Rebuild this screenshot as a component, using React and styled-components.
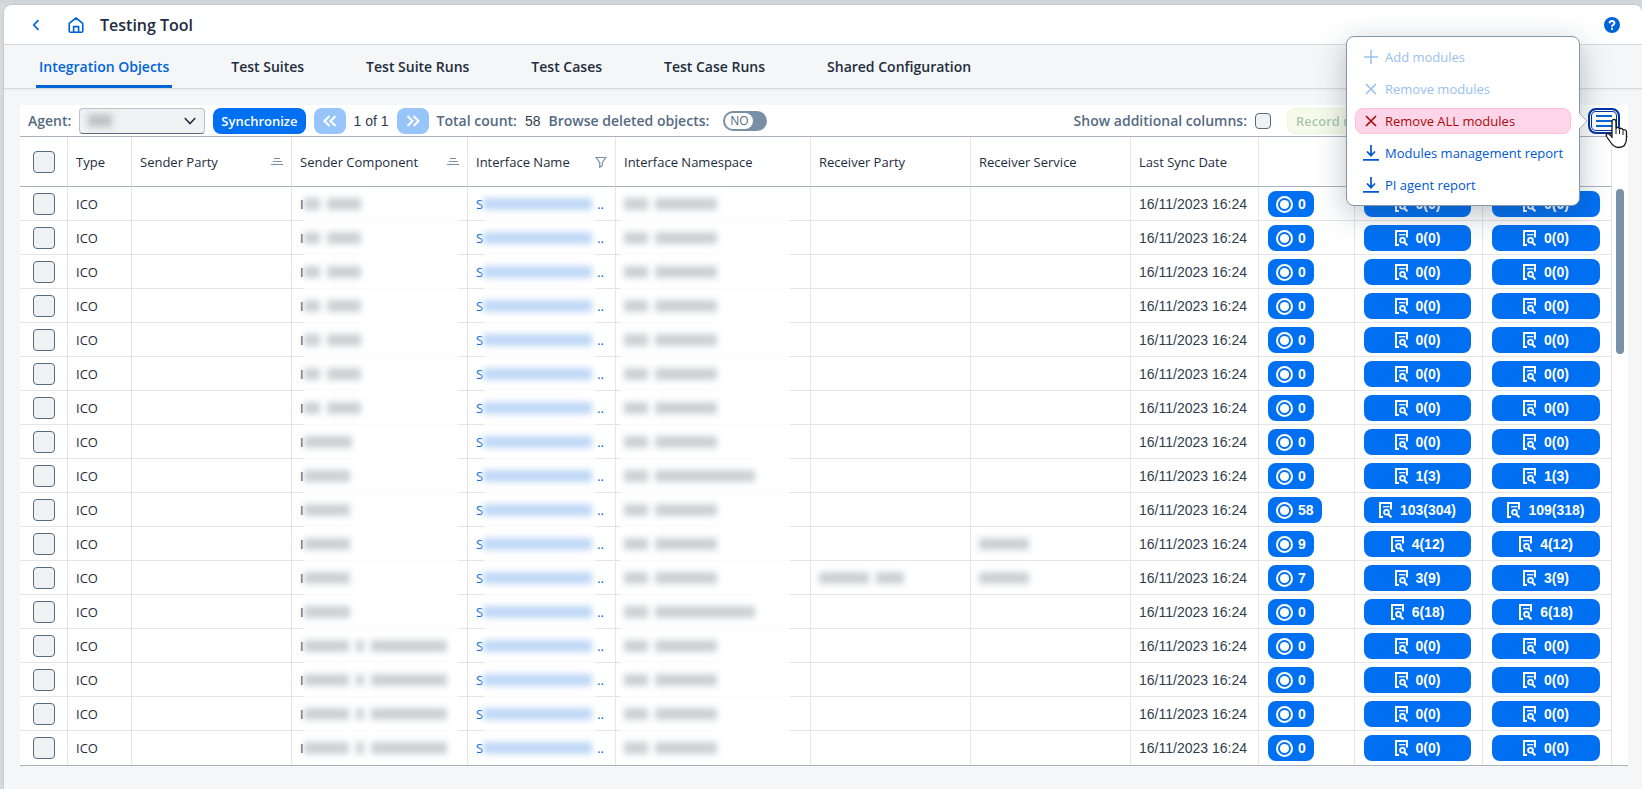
import styled, { createGlobalStyle, css } from "styled-components";
import { useState } from "react";

const GlobalStyle = createGlobalStyle`
  * {
    box-sizing: border-box;
  }

  body {
    margin: 0;
    background: #d5dadd;
    color: #1d2d3e;
    font-family: "Open Sans", "Noto Sans", sans-serif;
    font-size: 13px;
  }

  button, input, select {
    margin: 0;
    font-family: inherit;
    font-size: inherit;
  }
`;

const Page = styled.div`
  min-height: 100vh;
  padding: 5px 0 0 4px;
  background: linear-gradient(#cfd4d8, #d5dadd 6px);
  display: flex;
`;

const AppWindow = styled.div`
  flex: 1;
  min-width: 0;
  border-radius: 8px 8px 0 0;
  background: #f5f6f7;
  box-shadow: 0 0 2px rgba(85, 107, 130, 0.4);
`;

const ShellBar = styled.header`
  display: flex;
  align-items: center;
  height: 40px;
  padding: 0 22px 0 24px;
  border-radius: 8px 8px 0 0;
  border-bottom: 1px solid #d9d9d9;
  background: #fff;
`;

const IconButton = styled.button`
  display: flex;
  align-items: center;
  justify-content: center;
  width: 16px;
  height: 16px;
  padding: 0;
  border: none;
  background: none;
  color: #0064d9;
  cursor: pointer;
  margin-right: ${(props) => props.$gap || "0"};
`;

const Title = styled.h1`
  flex: 1;
  margin: 0;
  font-size: 16px;
  line-height: 20px;
  font-weight: 600;
`;

const Tabs = styled.nav`
  display: flex;
  gap: 56px;
  height: 44px;
  padding: 0 32px;
  border-bottom: 1px solid #d9d9d9;
  box-shadow: 0 1px 2px rgba(85, 107, 130, 0.08);
`;

const Tab = styled.a`
  padding: 0 3px;
  line-height: 44px;
  font-size: 14px;
  font-weight: 600;
  color: #1d2d3e;
  text-decoration: none;
  white-space: nowrap;

  ${(props) =>
    props.$active &&
    css`
      color: #0064d9;
      box-shadow: inset 0 -3px 0 #0064d9;
    `}
`;

const Panel = styled.main`
  margin: 16px 14px 23px 16px;
  background: #fff;
  border-bottom: 1px solid #a8b2bd;
`;

const Toolbar = styled.div`
  display: flex;
  align-items: center;
  justify-content: space-between;
  height: 32px;
  padding: 0 8px;
  border-bottom: 1px solid #a8b2bd;
`;

const ToolbarGroup = styled.div`
  display: flex;
  align-items: center;
  gap: 8px;
`;

const Label = styled.label`
  font-size: 14px;
  font-weight: 600;
  color: #556b82;
  white-space: nowrap;
`;

const Value = styled.span`
  font-family: "Liberation Sans", Arial, sans-serif;
  font-size: 14px;
  color: #2f3e4e;
  white-space: nowrap;
`;

const SelectBox = styled.div`
  position: relative;
  width: 126px;
  height: 26px;

  svg {
    position: absolute;
    right: 9px;
    top: 7px;
    pointer-events: none;
  }
`;

const Select = styled.select`
  appearance: none;
  width: 100%;
  height: 100%;
  border: 1px solid #bcc3ca;
  border-bottom-color: #556b82;
  border-radius: 4px;
  background: #eff1f2;
`;

const SelectValue = styled.span`
  position: absolute;
  left: 9px;
  top: 6px;
  width: 24px;
  height: 13px;
  background: #c0c3c6;
  filter: blur(3px);
  pointer-events: none;
`;

const Button = styled.button`
  display: flex;
  align-items: center;
  justify-content: center;
  height: 26px;
  padding: 0 8px;
  border: none;
  border-radius: 8px;
  background: #0070f2;
  color: #fff;
  font-weight: 600;
  white-space: nowrap;
  cursor: pointer;

  &:disabled {
    opacity: 0.4;
    cursor: default;
  }
`;

const PageButton = styled(Button)`
  width: 32px;
  padding: 0;
`;

const RecordButton = styled(Button)`
  justify-content: flex-start;
  width: 160px;
  margin: 0 133px 0 8px;
  border: 1px solid #d5e8a0;
  background: #ebf5cb;
  color: #256f3a;
`;

const Switch = styled.label`
  display: flex;
  align-items: center;
  width: 44px;
  height: 20px;
  margin-left: 6px;
  border: 2px solid #788fa6;
  border-radius: 10px;
  background: #788fa6;
  cursor: pointer;

  input {
    position: absolute;
    opacity: 0;
  }
`;

const SwitchHandle = styled.span`
  width: 28px;
  height: 16px;
  margin-left: ${(props) => (props.$on ? "12px" : "0")};
  border-radius: 8px;
  background: #fff;
  color: #556b82;
  font-size: 12px;
  line-height: 16px;
  text-align: center;
`;

const Checkbox = styled.input.attrs({ type: "checkbox" })`
  appearance: none;
  display: block;
  width: ${(props) => props.$size || "22px"};
  height: ${(props) => props.$size || "22px"};
  border: 1px solid #556b82;
  border-radius: 4px;
  background: #eff1f2;

  &:checked {
    background: #0064d9;
  }
`;

const MenuAnchor = styled.div`
  position: relative;
`;

const MenuButton = styled.button`
  display: flex;
  align-items: center;
  justify-content: center;
  width: 32px;
  height: 26px;
  padding: 0;
  border: 2px solid #0032a5;
  border-radius: 8px;
  background: #fff;
  box-shadow: inset 0 0 0 1px #fff, inset 0 0 0 2px #0032a5;
  color: #0064d9;
`;

const Popover = styled.div`
  position: absolute;
  z-index: 2;
  right: 40px;
  top: -72px;
  width: 234px;
  padding: 7px 8px;
  display: flex;
  flex-direction: column;
  gap: 6px;
  border: 1px solid #8696a9;
  border-radius: 8px;
  background: #fff;
  box-shadow: 0 8px 30px rgba(34, 53, 72, 0.3);
`;

const PopoverArrow = styled.svg`
  position: absolute;
  left: 100%;
  top: 76px;
`;

const MenuItem = styled.button`
  display: flex;
  align-items: center;
  gap: 6px;
  height: 26px;
  padding: 0 0 0 7px;
  border: 1px solid transparent;
  border-radius: 8px;
  background: none;
  color: #0057d2;
  font-weight: 500;
  white-space: nowrap;

  svg {
    flex-shrink: 0;
  }

  &:disabled {
    color: #99c1ee;
  }

  ${(props) =>
    props.$danger &&
    css`
      border-color: #ffc0dc;
      background: #ffd6e9;
      color: #aa0808;
    `}
`;

const Cursor = styled.svg`
  position: absolute;
  z-index: 3;
  left: 17px;
  top: 0;
  pointer-events: none;
`;

const TableArea = styled.div`
  display: flex;
`;

const Table = styled.table`
  flex: 1;
  min-width: 0;
  table-layout: fixed;
  border-spacing: 0;
`;

const HeaderCell = styled.th`
  width: ${(props) => props.$width};
  height: 50px;
  padding: 0 8px;
  border-right: 1px solid #e5e5e5;
  border-bottom: 1px solid #a8b2bd;
  font-weight: 400;
  text-align: left;
  white-space: nowrap;

  &:first-child {
    padding-left: 13px;
  }
`;

const HeaderContent = styled.div`
  display: flex;
  align-items: center;
  justify-content: space-between;
`;

const Cell = styled.td`
  height: 34px;
  padding: 0 8px;
  border-right: 1px solid #e5e5e5;
  background: linear-gradient(#e5e5e5, #e5e5e5) bottom / 100% 1px no-repeat;
  white-space: nowrap;
  overflow: hidden;

  &:first-child {
    padding-left: 13px;
  }

  ${(props) =>
    props.$mask &&
    css`
      background-image: linear-gradient(
        to right,
        #e5e5e5 ${props.$mask[0]},
        #fafafa ${props.$mask[0]},
        #fafafa calc(100% - ${props.$mask[1]}),
        #e5e5e5 calc(100% - ${props.$mask[1]})
      );
    `}

  tr:last-child > & {
    background: none;
  }
`;

const ActionCell = styled(Cell)`
  padding: 0 11px 0 9px;
`;

const CellText = styled.div`
  display: flex;
  align-items: center;
`;

const NameLink = styled.a`
  display: flex;
  align-items: center;
  color: #0064d9;
  text-decoration: none;
`;

const Smudge = styled.span`
  width: ${(props) => props.$width};
  height: 12px;
  margin-right: ${(props) => (props.$blue ? "5px" : "7px")};
  background: ${(props) => (props.$blue ? "#bfd8f7" : "#cdd0d3")};
  filter: blur(3px);
`;

const CountButton = styled(Button)`
  width: ${(props) => props.$width};
  gap: ${(props) => (props.$width ? "8px" : "5px")};
  font-family: "Liberation Sans", Arial, sans-serif;
  font-size: 14px;
`;

const ScrollRail = styled.div`
  width: 16px;
  padding: 52px 4px 0;
`;

const ScrollThumb = styled.div`
  height: 165px;
  border-radius: 4px;
  background: #7b91a8;
`;

const Svg = ({ size = 16, width = 2, children, ...rest }) => (
  <svg
    width={size}
    height={size}
    viewBox="0 0 16 16"
    fill="none"
    stroke="currentColor"
    strokeWidth={width}
    aria-hidden="true"
    {...rest}
  >
    {children}
  </svg>
);

const BackIcon = () => (
  <Svg width={1.7}>
    <path d="M10.5 3.2 L5.8 8 L10.5 12.8" />
  </Svg>
);

const HomeIcon = () => (
  <Svg width={1.6}>
    <path
      d="M2.6 15.2 C1.8 15.2 1.2 14.8 1.2 14 V6.4 L8 1 L14.8 6.4 V14 C14.8 14.8 14.2 15.2 13.4 15.2 H10.6 V9.6 H5.6 V15.2 Z"
      strokeLinejoin="round"
    />
    <path d="M5.6 15.2 H10.6" />
  </Svg>
);

const HelpIcon = () => (
  <Svg>
    <circle cx="8" cy="8" r="8" fill="currentColor" stroke="none" />
    <path d="M5.6 6.3 C5.6 3.2 10.5 3.3 10.4 6.2 C10.3 7.9 8 7.7 8 9.8" stroke="#fff" strokeWidth="2" />
    <rect x="7" y="10.8" width="2" height="2" fill="#fff" stroke="none" />
  </Svg>
);

const DoubleArrow = ({ next }) => (
  <Svg width={2}>
    <path d={next ? "M2.5 3 L7.5 8 L2.5 13 M8.5 3 L13.5 8 L8.5 13" : "M7.5 3 L2.5 8 L7.5 13 M13.5 3 L8.5 8 L13.5 13"} />
  </Svg>
);

const SortIcon = () => (
  <svg width="12" height="8" fill="#788fa6" aria-hidden="true">
    <rect x="3" y="0" width="6" height="1" />
    <rect x="2" y="3" width="9" height="1" />
    <rect x="0" y="6" width="12" height="1" />
  </svg>
);

const FilterIcon = () => (
  <Svg size={12} width={1.6} color="#788fa6">
    <path d="M1.5 2 H14.5 L9.7 8.5 V13 L6.3 15 V8.5 Z" />
  </Svg>
);

const RecordIcon = () => (
  <svg width="17" height="17" viewBox="0 0 17 17" aria-hidden="true">
    <circle cx="8.5" cy="8.5" r="7.5" fill="none" stroke="#fff" strokeWidth="2" />
    <circle cx="8.5" cy="8.5" r="4.6" fill="#fff" />
  </svg>
);

const InspectIcon = () => (
  <svg width="13" height="16" viewBox="0 0 13 16" fill="none" stroke="#fff" strokeWidth="2" aria-hidden="true">
    <path d="M4 15 H1 V1 H12 V7.5" />
    <path d="M4 4.7 H10.5" strokeWidth="1.3" />
    <circle cx="7.5" cy="10.2" r="2.4" strokeWidth="1.8" />
    <path d="M9 12 L12.4 15.4" />
  </svg>
);

const AddIcon = () => (
  <Svg width={1.5}>
    <path d="M8 1 V15 M1 8 H15" />
  </Svg>
);

const CrossIcon = () => (
  <Svg width={1.6}>
    <path d="M3 3 L13 13 M13 3 L3 13" />
  </Svg>
);

const DownloadIcon = () => (
  <Svg width={1.7}>
    <path d="M8 0 V10.5 M4 6.5 L8 10.7 L12 6.5 M0 14.8 H16" />
  </Svg>
);

const tabs = [
  "Integration Objects",
  "Test Suites",
  "Test Suite Runs",
  "Test Cases",
  "Test Case Runs",
  "Shared Configuration",
];

const columns = [
  { title: "Type", width: "64px" },
  { title: "Sender Party", width: "160px", icon: <SortIcon /> },
  { title: "Sender Component", width: "176px", icon: <SortIcon /> },
  { title: "Interface Name", width: "148px", icon: <FilterIcon /> },
  { title: "Interface Namespace" },
  { title: "Receiver Party", width: "160px" },
  { title: "Receiver Service", width: "160px" },
  { title: "Last Sync Date", width: "128px" },
  { title: "", width: "96px" },
  { title: "", width: "128px" },
  { title: "", width: "129px" },
];

const SHORT = [16, 34];
const LONG = [45, 8, 76];

const row = (component, extra) => ({
  component,
  space: [24, 62],
  party: [],
  service: [],
  records: "0",
  first: "0(0)",
  second: "0(0)",
  ...extra,
});

const rows = [
  row(SHORT),
  row(SHORT),
  row(SHORT),
  row(SHORT),
  row(SHORT),
  row(SHORT),
  row(SHORT),
  row([48]),
  row([46], { space: [24, 100], first: "1(3)", second: "1(3)" }),
  row([46], { records: "58", first: "103(304)", second: "109(318)" }),
  row([46], { service: [50], records: "9", first: "4(12)", second: "4(12)" }),
  row([46], { party: [50, 28], service: [50], records: "7", first: "3(9)", second: "3(9)" }),
  row([46], { space: [24, 100], first: "6(18)", second: "6(18)" }),
  row(LONG),
  row(LONG),
  row(LONG),
  row(LONG),
];

const Hidden = ({ words }) =>
  words.map((word, index) => <Smudge key={index} $width={word + "px"} />);

const ObjectRow = ({ item, index }) => (
  <tr>
    <Cell>
      <Checkbox aria-label={"Select row " + (index + 1)} />
    </Cell>
    <Cell>ICO</Cell>
    <Cell />
    <Cell $mask={["12px", "9px"]}>
      <CellText>
        I<Hidden words={item.component} />
      </CellText>
    </Cell>
    <Cell $mask={["16px", "19px"]}>
      <NameLink href="#object">
        S<Smudge $width="109px" $blue />
        ..
      </NameLink>
    </Cell>
    <Cell $mask={["4px", "20px"]}>
      <CellText>
        <Hidden words={item.space} />
      </CellText>
    </Cell>
    <Cell>
      <CellText>
        <Hidden words={item.party} />
      </CellText>
    </Cell>
    <Cell>
      <CellText>
        <Hidden words={item.service} />
      </CellText>
    </Cell>
    <Cell>
      <Value>16/11/2023 16:24</Value>
    </Cell>
    <ActionCell>
      <CountButton>
        <RecordIcon />
        {item.records}
      </CountButton>
    </ActionCell>
    <ActionCell>
      <CountButton $width="100%">
        <InspectIcon />
        {item.first}
      </CountButton>
    </ActionCell>
    <ActionCell>
      <CountButton $width="100%">
        <InspectIcon />
        {item.second}
      </CountButton>
    </ActionCell>
  </tr>
);

const ModulesMenu = () => (
  <Popover role="menu">
    <MenuItem disabled>
      <AddIcon />
      Add modules
    </MenuItem>
    <MenuItem disabled>
      <CrossIcon />
      Remove modules
    </MenuItem>
    <MenuItem $danger>
      <CrossIcon />
      Remove ALL modules
    </MenuItem>
    <MenuItem>
      <DownloadIcon />
      Modules management report
    </MenuItem>
    <MenuItem>
      <DownloadIcon />
      PI agent report
    </MenuItem>
    <PopoverArrow width="9" height="16" viewBox="0 0 9 16">
      <path d="M0 0 L8 8 L0 16" fill="#fff" stroke="#a5b1be" />
    </PopoverArrow>
  </Popover>
);

const App = () => {
  const [menuOpen, setMenuOpen] = useState(true);
  const [browseDeleted, setBrowseDeleted] = useState(false);

  return (
    <Page>
      <GlobalStyle />
      <AppWindow>
        <ShellBar>
          <IconButton aria-label="Back" $gap="24px">
            <BackIcon />
          </IconButton>
          <IconButton aria-label="Home" $gap="16px">
            <HomeIcon />
          </IconButton>
          <Title>Testing Tool</Title>
          <IconButton aria-label="Help">
            <HelpIcon />
          </IconButton>
        </ShellBar>
        <Tabs>
          {tabs.map((tab, index) => (
            <Tab key={tab} href="#tab" $active={index === 0}>
              {tab}
            </Tab>
          ))}
        </Tabs>
        <Panel>
          <Toolbar>
            <ToolbarGroup>
              <Label htmlFor="agent">Agent:</Label>
              <SelectBox>
                <Select id="agent">
                  <option></option>
                </Select>
                <SelectValue />
                <Svg size={12} width={2}>
                  <path d="M1 4 L8 11.5 L15 4" />
                </Svg>
              </SelectBox>
              <Button>Synchronize</Button>
              <PageButton disabled aria-label="Previous page">
                <DoubleArrow />
              </PageButton>
              <Value>1 of 1</Value>
              <PageButton disabled aria-label="Next page">
                <DoubleArrow next />
              </PageButton>
              <Label as="span">Total count:</Label>
              <Value>58</Value>
              <Label htmlFor="deleted">Browse deleted objects:</Label>
              <Switch>
                <input
                  id="deleted"
                  type="checkbox"
                  checked={browseDeleted}
                  onChange={() => {
                    setBrowseDeleted(!browseDeleted);
                  }}
                />
                <SwitchHandle $on={browseDeleted}>
                  {browseDeleted ? "YES" : "NO"}
                </SwitchHandle>
              </Switch>
            </ToolbarGroup>
            <ToolbarGroup>
              <Label htmlFor="additional">Show additional columns:</Label>
              <Checkbox id="additional" $size="16px" />
              <RecordButton disabled>Record messages</RecordButton>
              <MenuAnchor>
                <MenuButton
                  aria-label="Modules menu"
                  onClick={() => {
                    setMenuOpen(!menuOpen);
                  }}
                >
                  <Svg>
                    <path d="M0 3 H16 M0 8 H16 M0 13 H16" />
                  </Svg>
                </MenuButton>
                {menuOpen && <ModulesMenu />}
                <Cursor width="23" height="41" viewBox="0 -10 23 41">
                  <path
                    d="M7 20 V4 C7 0.5 11 0.5 11 4 V11 C11 8.5 14.5 9 14.5 11.5 C15 9.5 18 10 18 12.5 C18.5 11 21.5 11.5 21.5 14 V20 C21.5 26 18.5 29.5 13.5 29.5 C9 29.5 7 26.5 5 23.5 L1.5 18.5 C0.5 16 3 14.5 4.8 16.5 L7 19"
                    fill="#fff"
                    stroke="#16161a"
                    strokeWidth="1.3"
                  />
                  <path d="M11 11 V16 M14.5 12 V16 M18 13 V17" stroke="#16161a" />
                </Cursor>
              </MenuAnchor>
            </ToolbarGroup>
          </Toolbar>
          <TableArea>
            <Table>
              <thead>
                <tr>
                  <HeaderCell $width="48px">
                    <Checkbox aria-label="Select all" />
                  </HeaderCell>
                  {columns.map((column, index) => (
                    <HeaderCell key={index} $width={column.width}>
                      <HeaderContent>
                        {column.title}
                        {column.icon}
                      </HeaderContent>
                    </HeaderCell>
                  ))}
                </tr>
              </thead>
              <tbody>
                {rows.map((item, index) => (
                  <ObjectRow key={index} item={item} index={index} />
                ))}
              </tbody>
            </Table>
            <ScrollRail>
              <ScrollThumb />
            </ScrollRail>
          </TableArea>
        </Panel>
      </AppWindow>
    </Page>
  );
};

export default App;
